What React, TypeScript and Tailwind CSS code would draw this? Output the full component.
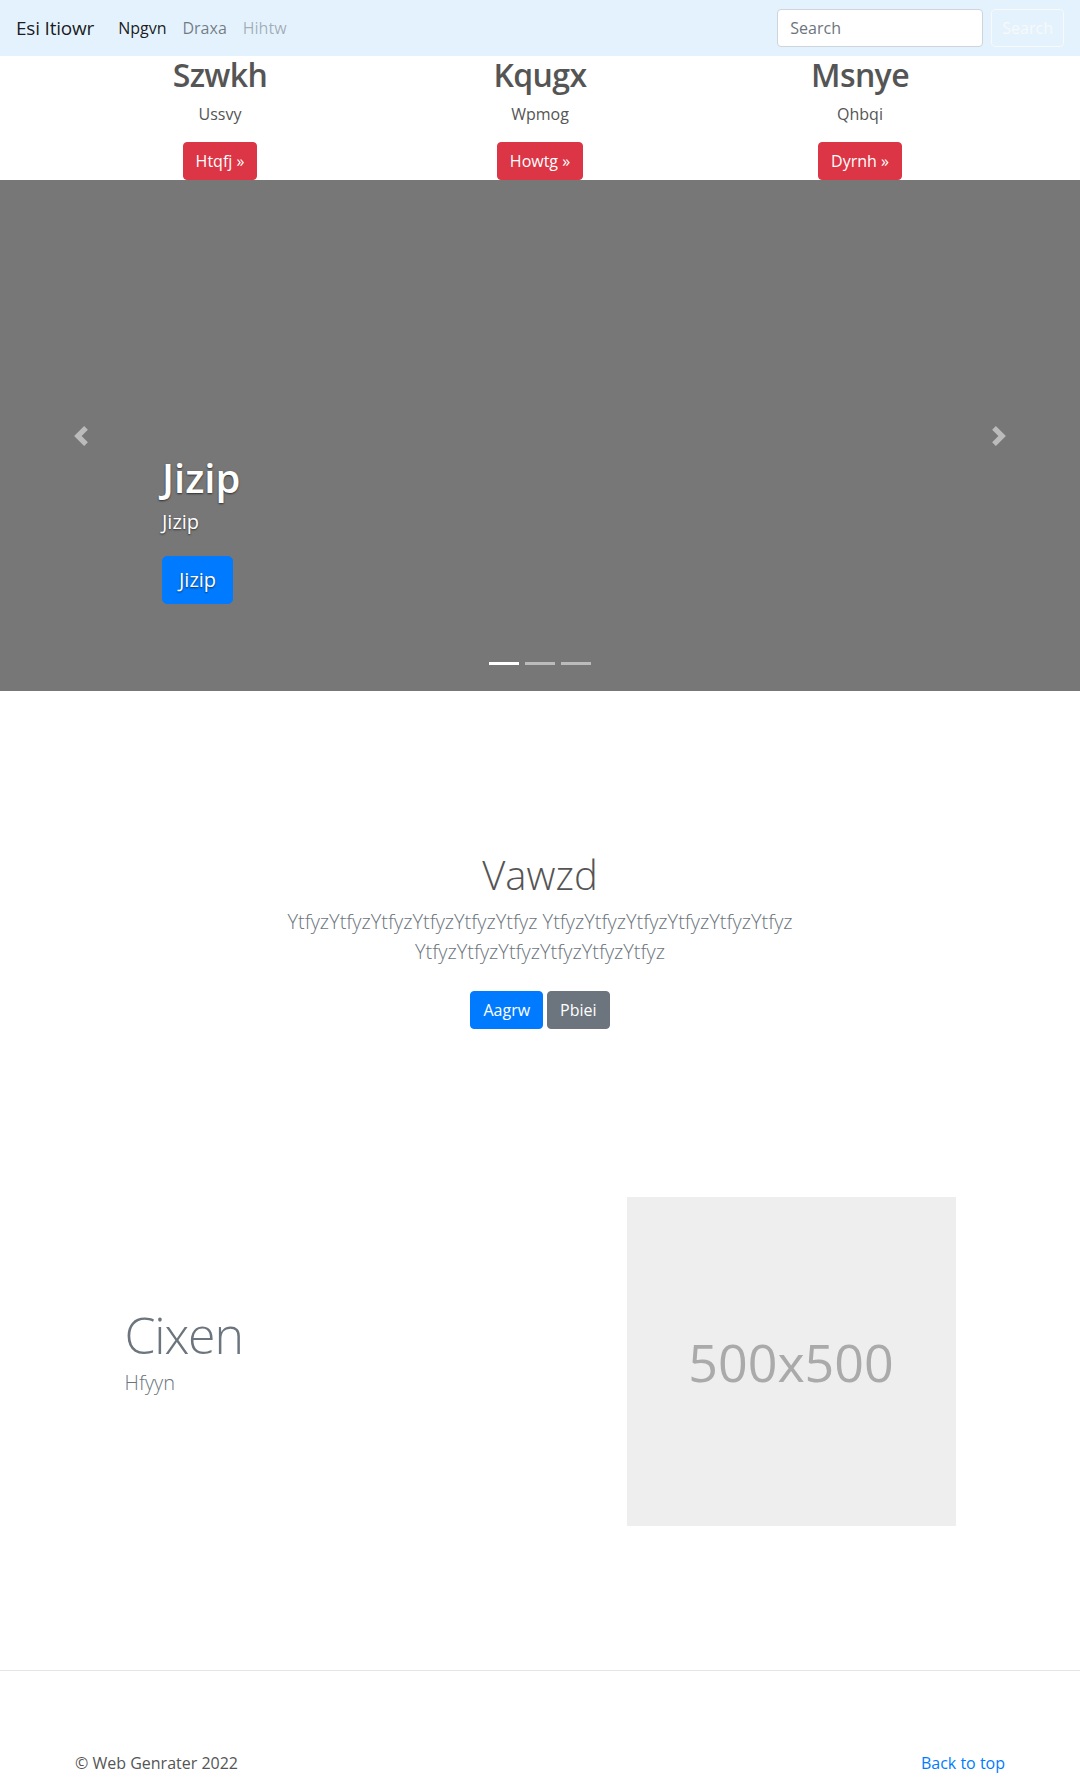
const columns = [
  { title: "Szwkh", sub: "Ussvy", btn: "Htqfj" },
  { title: "Kqugx", sub: "Wpmog", btn: "Howtg" },
  { title: "Msnye", sub: "Qhbqi", btn: "Dyrnh" },
];

function ChevronLeft() {
  return (
    <svg width="20" height="20" viewBox="0 0 8 8" fill="#fff">
      <path d="M5.25 0l-4 4 4 4 1.5-1.5-2.5-2.5 2.5-2.5-1.5-1.5z" />
    </svg>
  );
}

function ChevronRight() {
  return (
    <svg width="20" height="20" viewBox="0 0 8 8" fill="#fff">
      <path d="M2.75 0l-1.5 1.5 2.5 2.5-2.5 2.5 1.5 1.5 4-4-4-4z" />
    </svg>
  );
}

export default function App() {
  const lead = "YtfyzYtfyzYtfyzYtfyzYtfyzYtfyz";

  return (
    <div className="min-h-screen bg-white font-['Open_Sans',sans-serif] text-base leading-6 text-[#555]">
      {/* navbar */}
      <nav className="flex h-[56px] items-center bg-[#e3f2fd] px-4">
        <a href="#" className="mr-4 text-[19px] leading-[30px] tracking-[-0.2px] text-black/90">
          Esi Itiowr
        </a>
        <ul className="flex">
          <li>
            <a href="#" className="block px-2 py-2 text-black/90">Npgvn</a>
          </li>
          <li>
            <a href="#" className="block px-2 py-2 text-black/50">Draxa</a>
          </li>
          <li>
            <span className="block px-2 py-2 text-black/30">Hihtw</span>
          </li>
        </ul>
        <form className="ml-auto flex">
          <input
            placeholder="Search"
            className="mr-2 h-[38px] w-[206px] rounded border border-[#ced4da] bg-white px-3 text-[#495057] outline-none placeholder:text-[#6c757d]"
          />
          <button
            type="button"
            className="h-[38px] rounded border border-[#f8f9fa] px-[10px] text-[#f8f9fa]"
          >
            Search
          </button>
        </form>
      </nav>

      {/* marketing columns */}
      <div className="mx-auto grid w-[960px] grid-cols-3 text-center">
        {columns.map((c) => (
          <div key={c.title} className="px-[15px]">
            <h2 className="mb-2 text-[32px] font-semibold leading-[1.2] tracking-[-0.6px] text-[#555]">
              {c.title}
            </h2>
            <p className="mb-4">{c.sub}</p>
            <p>
              <a
                href="#"
                className="inline-block rounded border border-[#dc3545] bg-[#dc3545] px-3 py-[6px] leading-6 text-white"
              >
                {c.btn} »
              </a>
            </p>
          </div>
        ))}
      </div>

      {/* carousel */}
      <div className="relative mb-16 h-[511px] overflow-hidden bg-[#777]">
        <div className="absolute bottom-[48px] left-[15%] right-[15%] z-10 pb-[23px] text-white [text-shadow:0_1px_2px_rgba(0,0,0,.6)]">
          <h1 className="mb-2 text-[40px] font-semibold leading-[1.2]">Jizip</h1>
          <p className="mb-[22px] text-[20px] leading-6">Jizip</p>
          <p className="mb-4">
            <a
              href="#"
              className="inline-block rounded-[5px] border border-[#007bff] bg-[#007bff] px-4 py-2 text-[20px] leading-[30px] text-white"
            >
              Jizip
            </a>
          </p>
        </div>
        <a href="#" className="absolute inset-y-0 left-0 flex w-[15%] items-center justify-center opacity-50">
          <ChevronLeft />
        </a>
        <a href="#" className="absolute inset-y-0 right-0 flex w-[15%] items-center justify-center opacity-50">
          <ChevronRight />
        </a>
        <ol className="absolute inset-x-0 bottom-0 mb-4 flex justify-center">
          <li className="mx-[3px] my-[10px] h-[3px] w-[30px] bg-white" />
          <li className="mx-[3px] my-[10px] h-[3px] w-[30px] bg-white opacity-50" />
          <li className="mx-[3px] my-[10px] h-[3px] w-[30px] bg-white opacity-50" />
        </ol>
      </div>

      {/* jumbotron */}
      <section className="py-24 text-center">
        <div className="mx-auto max-w-[640px] px-[15px]">
          <h1 className="mb-2 text-[40px] font-light leading-[1.2] text-[#555]">Vawzd</h1>
          <p className="mb-4 text-[20px] font-light leading-[30px] text-[#6c757d]">
            {lead} {lead} {lead}
          </p>
          <p className="flex justify-center gap-1">
            <a href="#" className="my-2 inline-block rounded border border-[#007bff] bg-[#007bff] px-3 py-[6px] text-white">
              Aagrw
            </a>
            <a href="#" className="my-2 inline-block rounded border border-[#6c757d] bg-[#6c757d] px-3 py-[6px] text-white">
              Pbiei
            </a>
          </p>
        </div>
      </section>

      {/* featurette */}
      <div className="mx-auto flex w-[861px] items-center py-16">
        <div className="w-[502px] px-[15px]">
          <h2 className="mb-2 text-[50px] font-light leading-none tracking-[-1.2px] text-[#6c757d]">
            Cixen
          </h2>
          <p className="mb-4 text-[20px] font-light leading-[30px] text-[#6c757d]">Hfyyn</p>
        </div>
        <div className="flex-1 px-[15px]">
          <div className="flex aspect-square items-center justify-center bg-[#eee] text-[52px] text-[#aaa]">
            500x500
          </div>
        </div>
      </div>

      <hr className="mt-20 mb-20 border-t border-black/10" />

      {/* footer */}
      <footer className="mx-auto flex w-[960px] justify-between px-[15px]">
        <p className="mb-4">© Web Genrater 2022</p>
        <p>
          <a href="#" className="text-[#007bff]">Back to top</a>
        </p>
      </footer>
    </div>
  );
}
